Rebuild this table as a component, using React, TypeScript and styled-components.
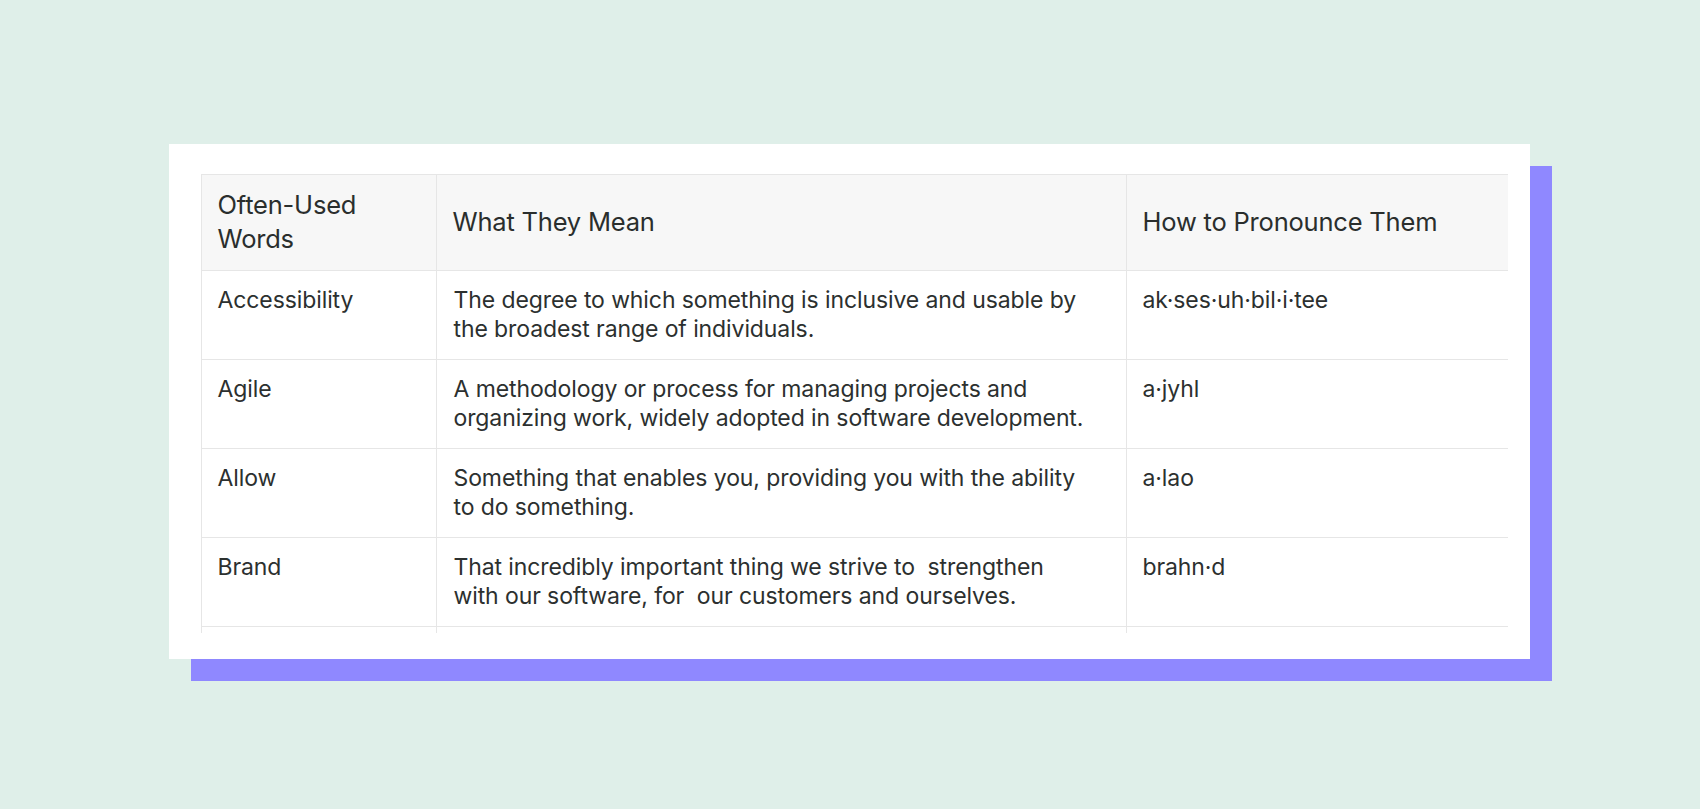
import styled, { createGlobalStyle } from "styled-components";

const GlobalStyle = createGlobalStyle`
  html, body {
    margin: 0;
    padding: 0;
    background: #dfefe9;
  }
  body {
    font-family: Inter, "Noto Sans", sans-serif;
    color: #2c302f;
  }
`;

const Page = styled.div`
  width: 100%;
  height: 809px;
  display: flex;
  align-items: center;
  justify-content: center;
  padding-bottom: 7px;
  box-sizing: border-box;
`;

const Card = styled.div`
  width: 1361px;
  box-sizing: border-box;
  background: #ffffff;
  padding: 30px 22px 26px 32px;
  box-shadow: 22px 22px 0 #8f88ff;
  margin-left: -2px;
`;

const TableFrame = styled.div`
  height: 459px;
  overflow: hidden;
`;

const Table = styled.table`
  width: 1307px;
  border-collapse: collapse;
  table-layout: fixed;
`;

const HeadCell = styled.th`
  background: #f7f7f7;
  border: 1px solid #e6e6e6;
  padding: 13px 17px 14px 16px;
  text-align: left;
  vertical-align: middle;
  font-weight: 400;
  font-size: 25.5px;
  line-height: 34px;
  letter-spacing: -0.2px;
  color: #2a2e2d;
`;

const Cell = styled.td<{ $wide?: boolean }>`
  border: 1px solid #e6e6e6;
  padding: ${(p) => (p.$wide ? "15px 38px 15px 17px" : "15px 16px")};
  vertical-align: top;
  font-size: 23px;
  line-height: 29px;
  letter-spacing: -0.1px;
  color: #2c302f;
  white-space: pre-wrap;
`;

const SpacerCell = styled.td`
  border: 1px solid #e6e6e6;
  height: 60px;
`;

const rows = [
  {
    word: "Accessibility",
    meaning:
      "The degree to which something is inclusive and usable by the broadest range of individuals.",
    say: "ak·ses·uh·bil·i·tee",
  },
  {
    word: "Agile",
    meaning:
      "A methodology or process for managing projects and organizing work, widely adopted in software development.",
    say: "a·jyhl",
  },
  {
    word: "Allow",
    meaning:
      "Something that enables you, providing you with the ability to do something.",
    say: "a·lao",
  },
  {
    word: "Brand",
    meaning:
      "That incredibly important thing we strive to  strengthen with our software, for  our customers and ourselves.",
    say: "brahn·d",
  },
];

export default function App() {
  return (
    <>
      <GlobalStyle />
      <Page>
        <Card>
          <TableFrame>
            <Table>
              <colgroup>
                <col style={{ width: 235 }} />
                <col style={{ width: 690 }} />
                <col style={{ width: 382 }} />
              </colgroup>
              <thead>
                <tr>
                  <HeadCell>Often-Used Words</HeadCell>
                  <HeadCell>What They Mean</HeadCell>
                  <HeadCell>How to Pronounce Them</HeadCell>
                </tr>
              </thead>
              <tbody>
                {rows.map((row) => (
                  <tr key={row.word}>
                    <Cell>{row.word}</Cell>
                    <Cell $wide>{row.meaning}</Cell>
                    <Cell>{row.say}</Cell>
                  </tr>
                ))}
                <tr>
                  <SpacerCell />
                  <SpacerCell />
                  <SpacerCell />
                </tr>
              </tbody>
            </Table>
          </TableFrame>
        </Card>
      </Page>
    </>
  );
}
